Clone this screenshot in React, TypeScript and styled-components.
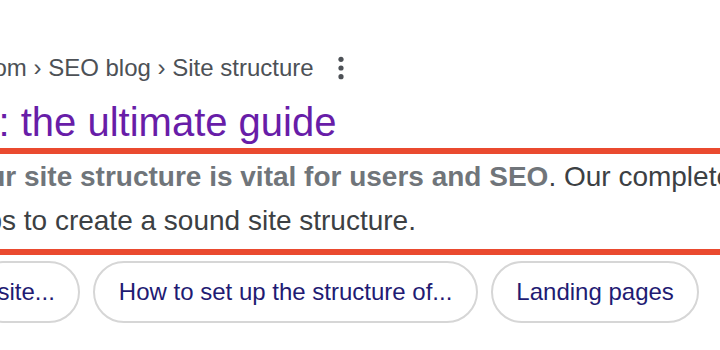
import React from "react";
import styled, { createGlobalStyle } from "styled-components";

const GlobalStyle = createGlobalStyle`
  html, body {
    margin: 0;
    padding: 0;
    background: #ffffff;
  }
  body {
    font-family: "Liberation Sans", Arial, sans-serif;
  }
`;

const Page = styled.div`
  width: 720px;
  height: 350px;
  overflow: hidden;
  box-sizing: border-box;
  padding-top: 53px;
  background: #ffffff;
`;

const Crumbs = styled.div<{ $shift: number }>`
  display: flex;
  align-items: center;
  gap: 22px;
  margin-left: ${(p) => p.$shift}px;
`;

const CrumbText = styled.span`
  font-size: 24px;
  line-height: 30px;
  color: #4d5156;
  white-space: nowrap;
`;

const KebabIcon = styled.svg`
  display: block;
  flex-shrink: 0;
  fill: #4d5156;
`;

const Title = styled.h3<{ $shift: number }>`
  margin: 15px 0 0 ${(p) => p.$shift}px;
  font-size: 40px;
  line-height: 48px;
  font-weight: 400;
  color: #681da8;
  white-space: nowrap;
`;

const SnippetBox = styled.div`
  margin-top: 1.6px;
  border-top: 6px solid #ea4a2f;
  border-bottom: 6px solid #ea4a2f;
  padding: 1px 0 6px;
`;

const SnippetLine = styled.div<{ $shift: number }>`
  margin-left: ${(p) => p.$shift}px;
  font-size: 28px;
  line-height: 44px;
  color: #3c4043;
  white-space: nowrap;
`;

const Em = styled.em`
  font-style: normal;
  font-weight: 700;
  color: #70757a;
`;

const ChipRow = styled.div<{ $shift: number }>`
  display: flex;
  gap: 13px;
  margin-top: 6px;
  margin-left: ${(p) => p.$shift}px;
`;

const Chip = styled.div`
  flex-shrink: 0;
  box-sizing: border-box;
  height: 62px;
  display: flex;
  align-items: center;
  padding: 0 23.5px;
  border: 2px solid #d6d6d6;
  border-radius: 31px;
  font-size: 24px;
  line-height: 28px;
  color: #1f1b73;
  white-space: nowrap;
`;

const Kebab = () => (
  <KebabIcon width="10" height="26" viewBox="0 0 10 26" aria-hidden="true">
    <circle cx="5" cy="4.3" r="2.6" />
    <circle cx="5" cy="13" r="2.6" />
    <circle cx="5" cy="21.7" r="2.6" />
  </KebabIcon>
);

const chips = ["site...", "How to set up the structure of...", "Landing pages"];

export default function App() {
  return (
    <>
      <GlobalStyle />
      <Page>
        <Crumbs $shift={-6.5}>
          <CrumbText>om › SEO blog › Site structure</CrumbText>
          <Kebab />
        </Crumbs>
        <Title $shift={-1.5}>: the ultimate guide</Title>
        <SnippetBox>
          <SnippetLine $shift={-11.8}>
            <Em>ur site structure is vital for users and SEO</Em>. Our complete
          </SnippetLine>
          <SnippetLine $shift={-13.6}>ps to create a sound site structure.</SnippetLine>
        </SnippetBox>
        <ChipRow $shift={-28}>
          {chips.map((c) => (
            <Chip key={c}>{c}</Chip>
          ))}
        </ChipRow>
      </Page>
    </>
  );
}
